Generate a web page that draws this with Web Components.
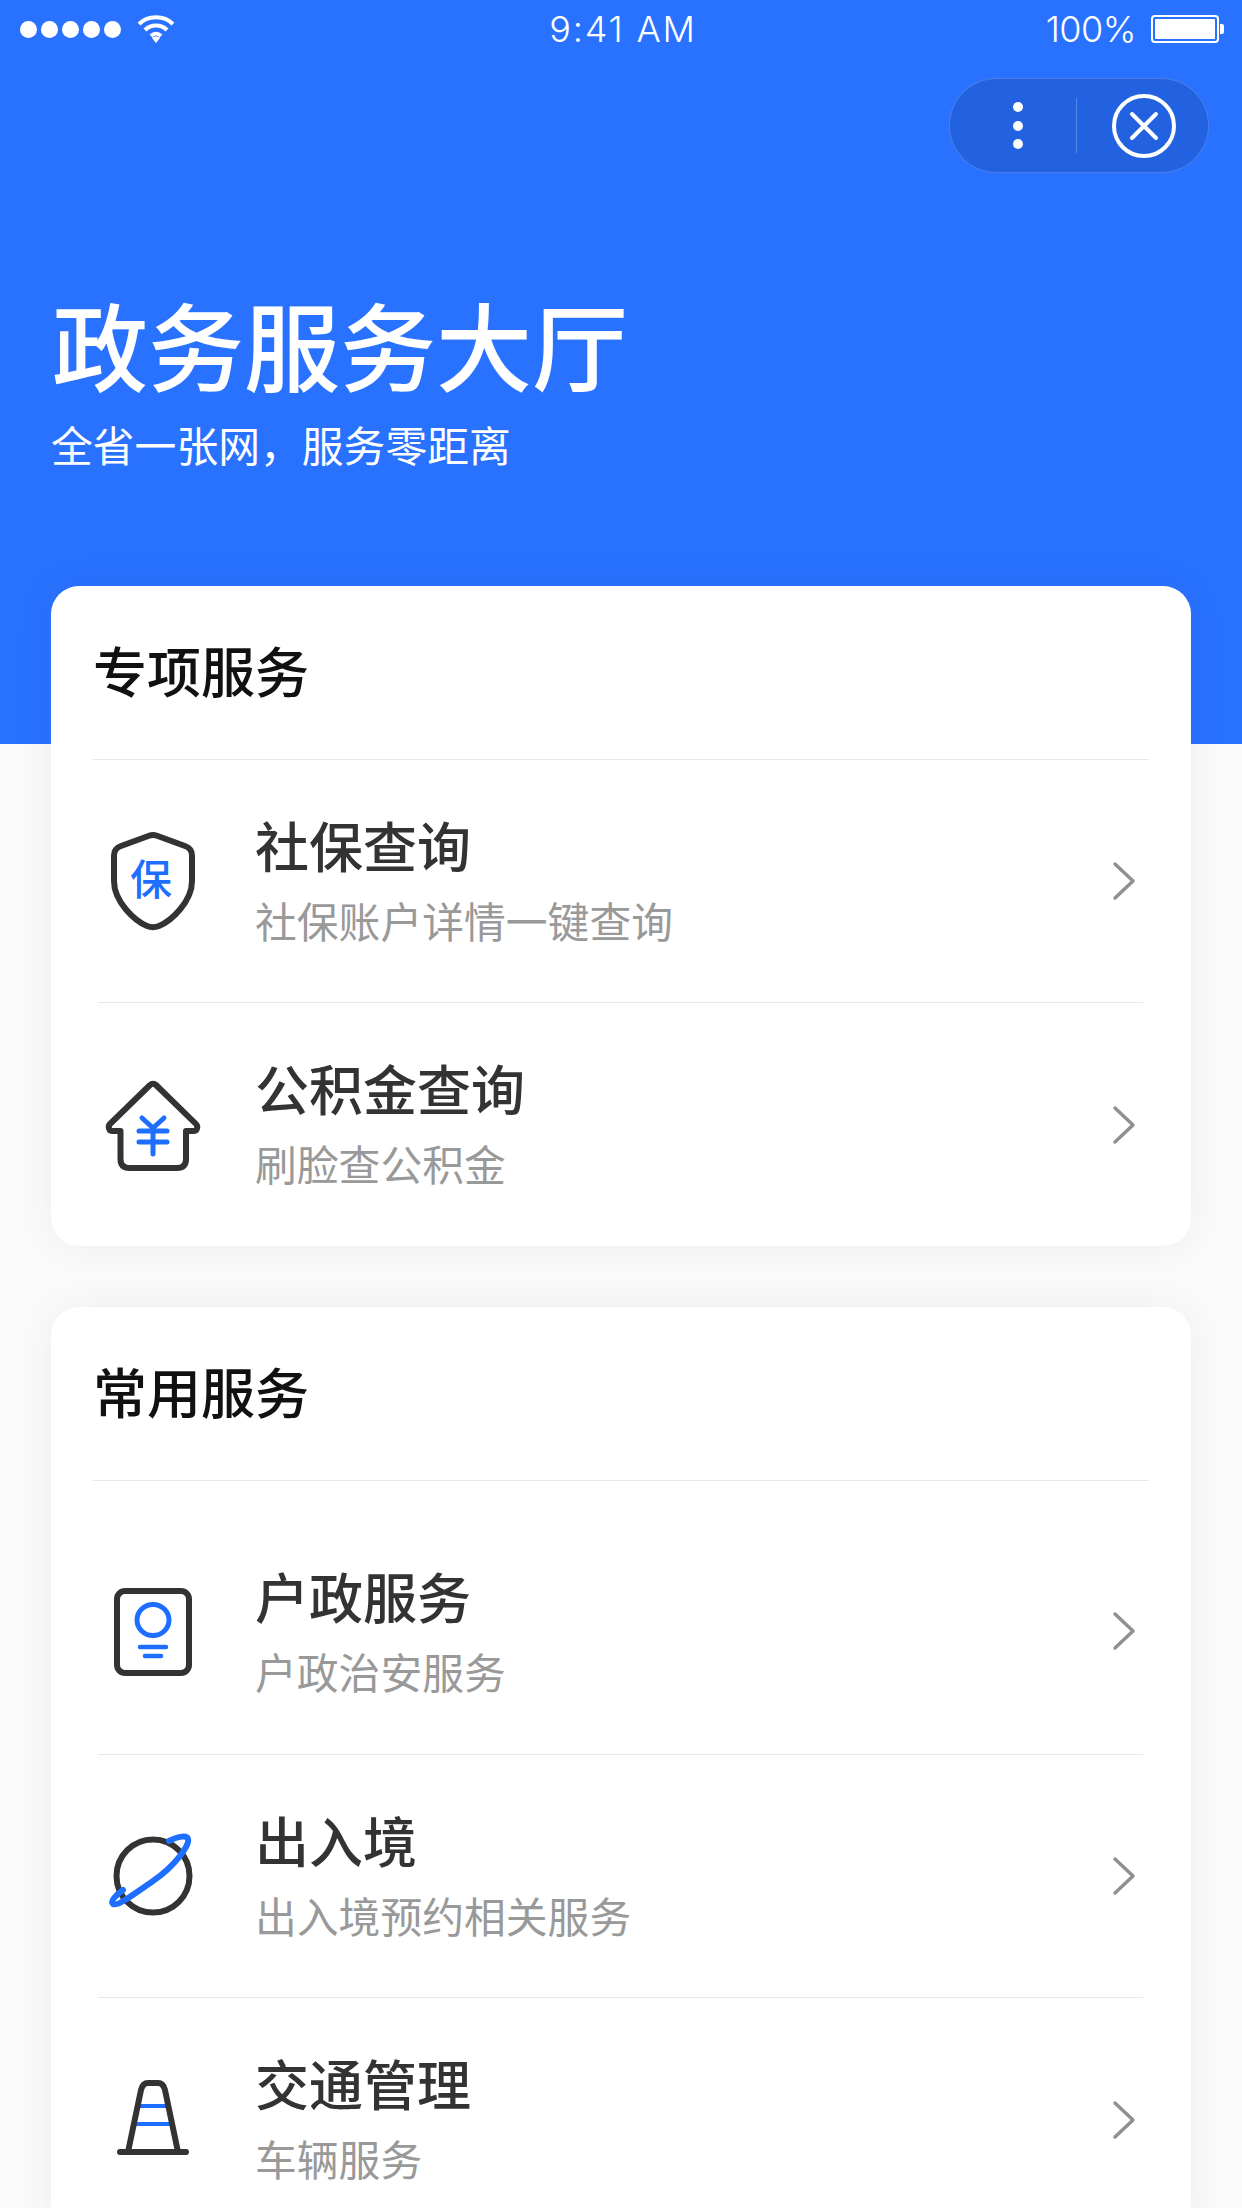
<!DOCTYPE html>
<html lang="zh-CN">
<head>
<meta charset="utf-8">
<title>政务服务大厅</title>
<style>
  html, body {
    margin: 0;
    height: 2208px;
    overflow: hidden;
  }
  body {
    background: linear-gradient(#2972ff 744px, #fafafa 744px);
    font-family: "Noto Sans CJK SC", "Noto Sans", sans-serif;
  }
</style>
</head>
<body>

<status-bar></status-bar>
<nav-capsule></nav-capsule>
<hero-title heading="政务服务大厅" tagline="全省一张网，服务零距离"></hero-title>

<service-card heading="专项服务">
  <service-row heading="社保查询" desc="社保账户详情一键查询">
    <svg slot="icon" width="112" height="112" viewBox="0 0 112 112" fill="none">
      <path d="M52 10.800c2.600-1 5.400-1 8 0l28 10.200c4.400 1.600 7 5 7 9.500V56c0 21-21 40-33 45-4 1.600-8 1.600-12 0C38 96 17 77 17 56V30.500c0-4.500 2.600-7.900 7-9.500z" stroke="#333" stroke-width="6" stroke-linejoin="round"/>
      <text x="54" y="70" text-anchor="middle" font-family="Noto Sans CJK SC" font-size="42" font-weight="500" fill="#1e6fff">保</text>
    </svg>
  </service-row>
  <service-row heading="公积金查询" desc="刷脸查公积金" last>
    <svg slot="icon" width="112" height="112" viewBox="0 0 112 112" fill="none" stroke-linecap="round" stroke-linejoin="round">
      <path d="M53 16 13 55c-2.500 2.500-1 7 2.500 7H23.500V90c0 6 3 9 9 9H80c6 0 9-3 9-9V62H96.500c3.500 0 5-4.500 2.500-7L59 16c-1.700-1.700-4.300-1.700-6 0z" stroke="#333" stroke-width="6"/>
      <path d="M45 49 56 59 67 49M42 62H70M42 73H70M56 59V85" stroke="#1e6fff" stroke-width="5"/>
    </svg>
  </service-row>
</service-card>

<service-card heading="常用服务">
  <service-row heading="户政服务" desc="户政治安服务" roomy>
    <svg slot="icon" width="112" height="112" viewBox="0 0 112 112" fill="none" stroke-linecap="round">
      <rect x="20" y="14" width="72" height="82" rx="8" stroke="#333" stroke-width="6"/>
      <ellipse cx="56" cy="43" rx="16" ry="15.500" stroke="#1e6fff" stroke-width="5"/>
      <path d="M43 70H69M48 79H64" stroke="#1e6fff" stroke-width="4.500"/>
    </svg>
  </service-row>
  <service-row heading="出入境" desc="出入境预约相关服务">
    <svg slot="icon" width="112" height="112" viewBox="0 0 112 112" fill="none">
      <circle cx="56" cy="56" r="36.500" stroke="#333" stroke-width="6"/>
      <path d="M72 21C82 16 90 15 91 19 93 25 78 46 56 61 36 75 20 87 16 84 13 81 19 75 26 70" stroke="#1e6fff" stroke-width="6" stroke-linecap="round"/>
    </svg>
  </service-row>
  <service-row heading="交通管理" desc="车辆服务" last>
    <svg slot="icon" width="112" height="112" viewBox="0 0 112 112" fill="none" stroke-linecap="round" stroke-linejoin="round">
      <path d="M41 42H71M37 60H75" stroke="#1e6fff" stroke-width="4" stroke-linecap="butt"/>
      <path d="M31 88 44 26c1-4 3-7 7-7H61c4 0 6 3 7 7L81 88" stroke="#333" stroke-width="6"/>
      <path d="M23 88H89" stroke="#333" stroke-width="6"/>
    </svg>
  </service-row>
</service-card>

<script>
class StatusBar extends HTMLElement {
  constructor() {
    super();
    this.shadowDOM = this.attachShadow({ mode: 'open' });
    this.shadowDOM.innerHTML = `
      <style>
        :host {
          display: grid;
          grid-template-columns: 1fr auto 1fr;
          align-items: center;
          height: 58px;
          padding: 0 18px 0 20px;
          color: #fff;
          font-family: Inter, "Liberation Sans", sans-serif;
          font-weight: 300;
          font-size: 36px;
        }
        .left { display: flex; align-items: center; gap: 4px; }
        .dot { width: 17px; height: 17px; border-radius: 50%; background: #fff; }
        .wifi { margin-left: 12px; }
        .time { letter-spacing: 1.800px; padding-left: 2px; }
        .right { display: flex; justify-content: flex-end; align-items: center; gap: 15px; letter-spacing: -.5px; }
        .battery { display: flex; align-items: center; }
        .shell { width: 68px; height: 28px; box-sizing: border-box; border: 2px solid #fff; border-radius: 4px; padding: 2px; }
        .shell i { display: block; height: 100%; background: #fff; border-radius: 1px; }
        .nub { width: 4px; height: 10px; background: #fff; border-radius: 0 2px 2px 0; margin-left: 1px; }
      </style>
      <div class="left">
        <span class="dot"></span><span class="dot"></span><span class="dot"></span><span class="dot"></span><span class="dot"></span>
        <svg class="wifi" width="38" height="28" viewBox="0 0 38 28" fill="none" stroke="#fff" stroke-width="4">
          <path d="M2 9C11 0 27 0 36 9"/>
          <path d="M8 15C14 9 24 9 30 15"/>
          <path d="M14 21C17 18 21 18 24 21"/>
          <path d="M19 28 15 23C17 21 21 21 23 23z" fill="#fff" stroke="none"/>
        </svg>
      </div>
      <div class="time">9:41 AM</div>
      <div class="right">
        <span>100%</span>
        <span class="battery"><span class="shell"><i></i></span><span class="nub"></span></span>
      </div>
    `;
  }
}

class NavCapsule extends HTMLElement {
  constructor() {
    super();
    this.shadowDOM = this.attachShadow({ mode: 'open' });
    this.shadowDOM.innerHTML = `
      <style>
        :host { display: flex; justify-content: flex-end; padding: 20px 33px 0 0; }
        .capsule {
          width: 260px;
          height: 95px;
          box-sizing: border-box;
          display: grid;
          grid-template-columns: 126px 1px 1fr;
          align-items: center;
          background: #2262e0;
          border: 1px solid rgba(255, 255, 255, .18);
          border-radius: 48px;
        }
        .more { display: flex; flex-direction: column; align-items: center; gap: 8.500px; padding-left: 10px; }
        .more i { width: 10px; height: 10px; border-radius: 50%; background: #fff; }
        .line { height: 55px; background: rgba(255, 255, 255, .25); }
        .close { display: flex; justify-content: center; padding-left: 3px; }
      </style>
      <div class="capsule">
        <div class="more"><i></i><i></i><i></i></div>
        <div class="line"></div>
        <div class="close">
          <svg width="64" height="64" viewBox="0 0 64 64" fill="none" stroke="#fff" stroke-linecap="round">
            <circle cx="32" cy="32" r="30" stroke-width="4"/>
            <path d="M20 20 44 44M44 20 20 44" stroke-width="4"/>
          </svg>
        </div>
      </div>
    `;
  }
}

class HeroTitle extends HTMLElement {
  constructor() {
    super();
    this.shadowDOM = this.attachShadow({ mode: 'open' });
  }
  connectedCallback() {
    this.shadowDOM.innerHTML = `
      <style>
        :host { display: block; padding: 110px 51px 112px; color: #fff; }
        h1 { margin: 0 0 0 1px; font-size: 96px; line-height: 120px; font-weight: 500; }
        p { margin: 11px 0 0; font-size: 41.800px; line-height: 60px; font-weight: 400; }
      </style>
      <h1>${this.getAttribute('heading')}</h1>
      <p>${this.getAttribute('tagline')}</p>
    `;
  }
}

class ServiceCard extends HTMLElement {
  constructor() {
    super();
    this.shadowDOM = this.attachShadow({ mode: 'open' });
  }
  connectedCallback() {
    this.shadowDOM.innerHTML = `
      <style>
        :host {
          display: block;
          margin: 0 51px 61px;
          background: #fff;
          border-radius: 28px;
          box-shadow: 0 0 40px rgba(0, 0, 0, .05);
        }
        header {
          height: 173px;
          margin: 0 42px;
          display: flex;
          align-items: center;
          border-bottom: 1px solid #e8e8e8;
          font-size: 54px;
          font-weight: 500;
          color: #111;
        }
        header span { position: relative; top: -3px; }
      </style>
      <header><span>${this.getAttribute('heading')}</span></header>
      <slot></slot>
    `;
  }
}

class ServiceRow extends HTMLElement {
  constructor() {
    super();
    this.shadowDOM = this.attachShadow({ mode: 'open' });
  }
  connectedCallback() {
    const last = this.hasAttribute('last');
    const roomy = this.hasAttribute('roomy');
    this.shadowDOM.innerHTML = `
      <style>
        :host {
          display: flex;
          align-items: center;
          box-sizing: border-box;
          height: ${roomy ? 274 : 243}px;
          padding: ${roomy ? 30 : 0}px 7px 0 0;
          margin: 0 48px 0 47px;
          border-bottom: ${last ? 'none' : '1px solid #e8e8e8'};
        }
        .icon { width: 112px; height: 112px; flex: none; margin: 0 46px 0 -1px; }
        .text { flex: 1; padding-bottom: 3px; }
        h3 { margin: 0; font-size: 54px; line-height: 70px; font-weight: 500; color: #333; }
        p { margin: 10px 0 0; font-size: 41.800px; line-height: 60px; color: #999; }
        .chevron { margin-bottom: ${roomy ? 3 : 0}px; }
      </style>
      <div class="icon"><slot name="icon"></slot></div>
      <div class="text">
        <h3>${this.getAttribute('heading')}</h3>
        <p>${this.getAttribute('desc')}</p>
      </div>
      <svg class="chevron" width="24" height="40" viewBox="0 0 24 40" fill="none" stroke="#909090" stroke-width="3.500" stroke-linecap="round" stroke-linejoin="round">
        <path d="M3 3 21 20 3 37"/>
      </svg>
    `;
  }
}

customElements.define('status-bar', StatusBar);
customElements.define('nav-capsule', NavCapsule);
customElements.define('hero-title', HeroTitle);
customElements.define('service-card', ServiceCard);
customElements.define('service-row', ServiceRow);
</script>
</body>
</html>
